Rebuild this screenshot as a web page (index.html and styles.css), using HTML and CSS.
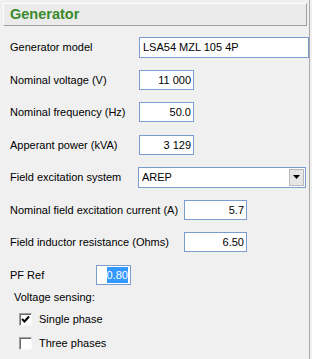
FILE: index.html
```html
<!DOCTYPE html>
<html>
<head>
<meta charset="utf-8">
<link rel="stylesheet" href="styles.css">
</head>
<body>
<div class="panel">
  <div class="header">Generator</div>
  <div class="form">
    <div class="row">
      <span class="label">Generator model</span>
      <div class="field left w-model">LSA54 MZL 105 4P</div>
    </div>
    <div class="row">
      <span class="label">Nominal voltage (V)</span>
      <div class="field w-short">11 000</div>
    </div>
    <div class="row">
      <span class="label">Nominal frequency (Hz)</span>
      <div class="field w-short">50.0</div>
    </div>
    <div class="row">
      <span class="label">Apperant power (kVA)</span>
      <div class="field w-short">3 129</div>
    </div>
    <div class="row">
      <span class="label">Field excitation system</span>
      <div class="combo">
        <span class="combo-text">AREP</span>
        <span class="combo-btn"><svg width="7" height="4" viewBox="0 0 7 4"><path d="M0 0h7L3.5 4z" fill="#000"/></svg></span>
      </div>
    </div>
    <div class="row">
      <span class="label wide">Nominal field excitation current (A)</span>
      <div class="field w-mid">5.7</div>
    </div>
    <div class="row">
      <span class="label wide">Field inductor resistance (Ohms)</span>
      <div class="field w-mid">6.50</div>
    </div>
    <div class="row">
      <span class="label narrow">PF Ref</span>
      <div class="field w-pf"><span class="sel">0.80</span></div>
    </div>
    <div class="sensing">
      <div class="sensing-label">Voltage sensing:</div>
      <div class="check-row">
        <span class="box"><svg width="9" height="9" viewBox="0 0 9 9"><path d="M1 4l2.5 2.5L8 1.5" fill="none" stroke="#000" stroke-width="2"/></svg></span>
        <span>Single phase</span>
      </div>
      <div class="check-row">
        <span class="box"></span>
        <span>Three phases</span>
      </div>
    </div>
  </div>
</div>
</body>
</html>
```

FILE: styles.css
```css
html, body {
  margin: 0;
  padding: 0;
  background: #f0f0f0;
}
body {
  font-family: "Liberation Sans", Arial, sans-serif;
  font-size: 11px;
  color: #000;
}
.panel {
  width: 310px;
  height: 359px;
  border-right: 1px solid #a8a8a8;
  box-sizing: border-box;
  padding-top: 3px;
}
.header {
  margin-left: 3px;
  width: 304px;
  height: 23px;
  box-sizing: border-box;
  background: #ebebeb;
  border-top: 1px solid #fdfdfd;
  border-left: 1px solid #fdfdfd;
  border-bottom: 1px solid #a0a0a0;
  border-right: 1px solid #a0a0a0;
  color: #3a8a2c;
  font-weight: bold;
  font-size: 14.5px;
  line-height: 21px;
  padding-left: 6px;
}
.form {
  padding-top: 5px;
}
.row {
  height: 32.5px;
  display: flex;
  align-items: center;
  padding-left: 10px;
}
.label {
  width: 129px;
  flex: none;
}
.label.wide {
  width: 174px;
}
.label.narrow {
  width: 86px;
}
.field {
  height: 20px;
  box-sizing: border-box;
  background: #fff;
  border: 1px solid #7a9ccf;
  line-height: 18px;
  text-align: right;
  padding: 0 2px;
  white-space: nowrap;
}
.field.left {
  text-align: left;
  padding-left: 3px;
  height: 21px;
  line-height: 19px;
}
.w-model { width: 170px; }
.w-short { width: 55px; }
.w-mid { width: 63px; }
.w-pf { width: 35px; }
.sel {
  background: #3399ff;
  color: #fff;
  display: inline-block;
  line-height: 16px;
}
.combo {
  margin-left: -1px;
  width: 168px;
  height: 21px;
  box-sizing: border-box;
  background: #fff;
  border: 1px solid #7a9ccf;
  display: flex;
  align-items: center;
  justify-content: space-between;
}
.combo-text {
  padding-left: 3px;
}
.combo-btn {
  width: 15px;
  height: 17px;
  margin-right: 1px;
  box-sizing: border-box;
  background: #e6e6e6;
  border: 1px solid #b8b8b8;
  display: flex;
  align-items: center;
  justify-content: center;
}
.sensing {
  padding-left: 14px;
}
.sensing-label {
  line-height: 14px;
  margin-top: -1px;
  margin-bottom: 3px;
}
.check-row {
  height: 24px;
  display: flex;
  align-items: center;
  padding-left: 5px;
  gap: 7px;
}
.box {
  width: 13px;
  height: 13px;
  box-sizing: border-box;
  background: #fff;
  border-top: 1px solid #a0a0a0;
  border-left: 1px solid #a0a0a0;
  border-right: 1px solid #f8f8f8;
  border-bottom: 1px solid #f8f8f8;
  box-shadow: inset 1px 1px 0 #696969;
  display: flex;
  align-items: center;
  justify-content: center;
}
```
